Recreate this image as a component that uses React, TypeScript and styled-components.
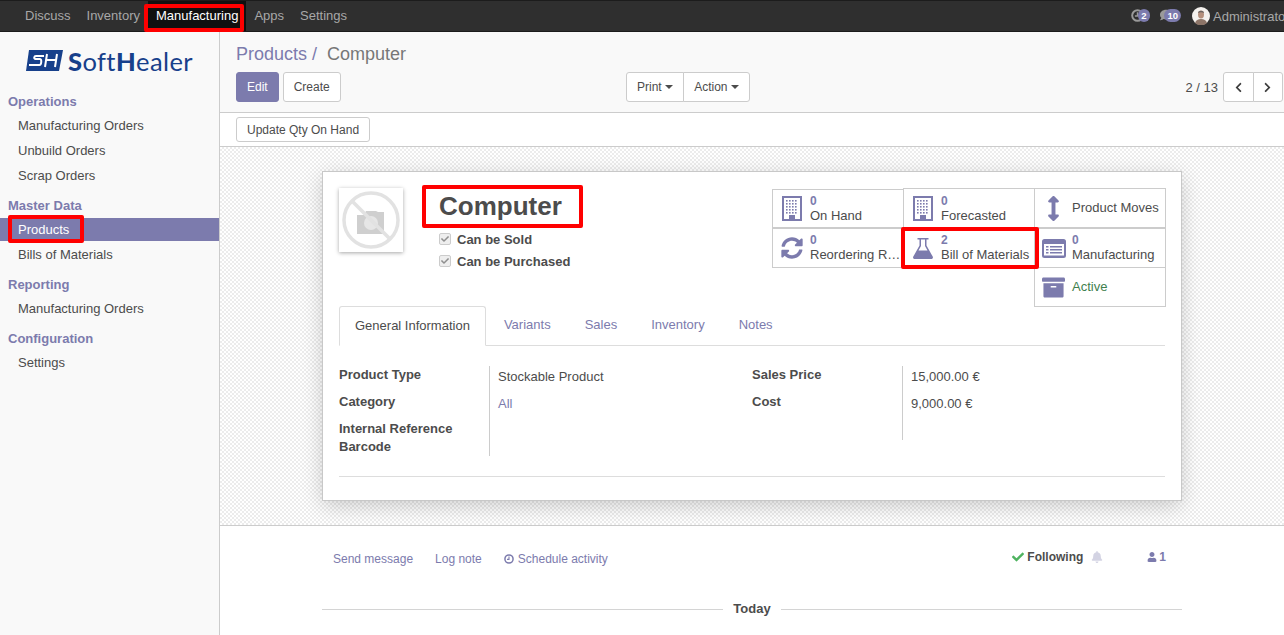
import React from 'react';
import styled, { createGlobalStyle } from 'styled-components';
import {
  FaSyncAlt, FaArrowsAltV, FaArchive, FaCheck, FaBell, FaUser,
  FaChevronLeft, FaChevronRight, FaComment,
} from 'react-icons/fa';

const primary = '#7c7bad';
const text = '#4c4c4c';
const line = '#cccccc';

const Global = createGlobalStyle`
  html, body { margin: 0; padding: 0; height: 635px; overflow: hidden; background: #fff; }
  body { font-family: "Liberation Sans", Arial, sans-serif; font-size: 13px; color: ${text}; }
  * { box-sizing: border-box; }
`;

const Page = styled.div`width: 1284px; height: 635px; display: flex; flex-direction: column; overflow: hidden;`;

const TopBar = styled.header`height: 32px; flex: none; display: flex; background: #2f2f2f; border-top: 1px solid #1c1c1c; border-bottom: 1px solid #1c1c1c;`;
const MenuList = styled.nav`flex: 1; min-width: 0; display: flex; padding-left: 17px;`;
const MenuItem = styled.a<{ $active?: boolean }>`
  position: relative; padding: 0 8px; line-height: 29px; height: 30px;
  color: ${p => (p.$active ? '#ffffff' : '#a8a8a8')};
  background: ${p => (p.$active ? '#101010' : 'transparent')};
`;
const NavMark = styled.span`position: absolute; left: -4px; right: 2px; top: 3px; bottom: -1px; border: 4px solid #ff0000; border-radius: 2px;`;
const Systray = styled.div`width: 153px; flex: none; overflow: hidden; display: flex; align-items: center; color: #a8a8a8; white-space: nowrap;`;
const TrayIcon = styled.span<{ $w: number }>`position: relative; width: ${p => p.$w}px; height: 16px; flex: none; display: block; color: #9a9a9a; svg { position: absolute; left: 0; top: 1px; }`;
const TrayBadge = styled.span`position: absolute; right: 0; top: 1px; height: 13px; min-width: 12px; padding: 0 3px; border-radius: 7px; background: ${primary}; color: #fff; font-size: 9.5px; font-weight: bold; line-height: 13px; text-align: center;`;
const Avatar = styled.svg`width: 18px; height: 18px; flex: none; margin: 0 3px 0 11px;`;

const Body = styled.div`flex: 1; min-height: 0; display: flex;`;
const Sidebar = styled.aside`width: 220px; flex: none; background: #f9f9f9; border-right: 1px solid ${line};`;
const LogoWrap = styled.div`height: 57px; display: flex; align-items: center; padding: 0 0 0 26px; gap: 5px;`;
const LogoText = styled.span`font-family: Lato, "Open Sans", sans-serif; font-size: 25.5px; line-height: 30px; color: #17408b; letter-spacing: 0.4px; b { font-weight: 900; }`;
const SideSection = styled.section`display: flex; flex-direction: column; margin-bottom: 5px;`;
const SideHead = styled.div`height: 24px; line-height: 26px; padding-left: 8px; font-weight: bold; color: ${primary};`;
const SideItem = styled.a<{ $active?: boolean }>`
  display: block; position: relative; height: 23px; line-height: 23px; margin: 1px 0; padding-left: 18px;
  color: ${p => (p.$active ? '#fff' : text)}; background: ${p => (p.$active ? primary : 'transparent')};
`;
const RowMark = styled.span`position: absolute; left: 8px; width: 76px; top: -3px; height: 28px; border: 4px solid #ff0000; border-radius: 2px;`;

const Main = styled.main`flex: 1; min-width: 0; display: flex; flex-direction: column;`;
const ControlPanel = styled.div`height: 81px; flex: none; background: #f9f9f9; border-bottom: 1px solid ${line}; padding: 0 1px 0 16px;`;
const Crumbs = styled.div`height: 40px; line-height: 44px; font-size: 18px; color: #777; span { color: ${primary}; margin-right: 10px; }`;
const ControlRow = styled.div`display: grid; grid-template-columns: 390px 1fr auto; align-items: center;`;
const Btn = styled.button<{ $primary?: boolean; $h?: number }>`
  height: ${p => p.$h ?? 30}px; padding: 0 10px; font: 12px "Liberation Sans", Arial, sans-serif;
  border: 1px solid ${p => (p.$primary ? primary : line)}; border-radius: 3px;
  background: ${p => (p.$primary ? primary : '#fff')}; color: ${p => (p.$primary ? '#fff' : text)};
  display: inline-flex; align-items: center; gap: 3.5px;
`;
const BtnRow = styled.div`display: flex; gap: 4px;`;
const JoinedGroup = styled.div`display: flex; ${Btn} { border-radius: 0; } ${Btn}:first-child { border-radius: 3px 0 0 3px; } ${Btn}:last-child { border-radius: 0 3px 3px 0; margin-left: -1px; }`;
const Caret = styled.span`width: 0; height: 0; border-left: 4px solid transparent; border-right: 4px solid transparent; border-top: 4px solid ${text};`;
const Pager = styled.div`display: flex; align-items: center; gap: 5px;`;
const PagerBtn = styled(Btn)`width: 30.5px; padding: 0; justify-content: center; color: #3d3d3d;`;

const StatusBar = styled.div`height: 34px; flex: none; background: #fff; border-bottom: 1px solid ${line}; padding: 4px 0 0 16px;`;

const SheetBg = styled.div`
  flex: none; padding: 24px 0; display: flex; justify-content: center; border-bottom: 1px solid ${line};
  background-color: #fff; background-image: conic-gradient(#ececec 25%, #fff 0 50%, #ececec 0 75%, #fff 0); background-size: 4px 4px;
`;
const Card = styled.div`width: 860px; height: 330px; background: #fff; border: 1px solid #c8c8c8; box-shadow: 0 5px 20px -1px rgba(0,0,0,0.2); padding: 16px 16px 0;`;
const Head = styled.div`height: 118px; display: flex; justify-content: space-between;`;
const HeadLeft = styled.div`display: flex;`;
const PhotoBox = styled.div`width: 64px; height: 64px; margin-right: 36px; background: #fff; box-shadow: 0 1px 4px rgba(0,0,0,0.35); svg { display: block; }`;
const TitleBlock = styled.div`padding-top: 1px;`;
const Title = styled.h1`position: relative; display: inline-block; margin: 0 0 5px; font-size: 26px; line-height: 34px; font-weight: bold; color: ${text};`;
const TitleMark = styled.span`position: absolute; left: -17px; right: -21px; top: -4px; bottom: -5px; border: 4px solid #ff0000; border-radius: 2px;`;
const CheckRow = styled.div`display: flex; align-items: center; height: 22px; font-weight: bold; gap: 6px;`;
const CheckBox = styled.span`width: 12px; height: 12px; border: 1px solid #ccc; border-radius: 2px; background: #eee; color: #8f8f8f; display: flex; align-items: center; justify-content: center; font-size: 8px;`;

const StatGrid = styled.div`display: grid; grid-template-columns: repeat(3, 131px); grid-template-rows: 40px 39px 40px; width: 394px; margin-right: -1px;`;
const Stat = styled.div<{ $col: number; $row: number; $lower?: boolean }>`
  grid-column: ${p => p.$col}; grid-row: ${p => p.$row};
  position: relative; width: 132px; height: ${p => (p.$lower ? 39 : 40)}px; margin-top: ${p => (p.$lower ? 1 : 0)}px;
  background: #fff; border: 1px solid ${line}; display: flex; align-items: center; color: ${text};
`;
const StatIcon = styled.span`width: 37px; flex: none; display: flex; justify-content: center; color: ${primary};`;
const StatBody = styled.div<{ $shift?: number }>`min-width: 0; width: 92px; margin-top: ${p => p.$shift ?? 0}px;`;
const StatNum = styled.div`font-weight: bold; color: ${primary}; font-size: 12px; line-height: 13px;`;
const StatLabel = styled.div<{ $green?: boolean }>`white-space: nowrap; line-height: 16px; color: ${p => (p.$green ? '#3f7f4f' : text)};`;
const StatMark = styled.span`position: absolute; z-index: 2; left: -3px; right: -5px; top: -2px; bottom: -2px; border: 4px solid #ff0000; border-radius: 2px;`;

const Tabs = styled.div`display: flex; height: 40px; border-bottom: 1px solid #ddd;`;
const Tab = styled.a<{ $active?: boolean }>`
  height: 40px; padding: 0 ${p => (p.$active ? 15 : 16)}px; margin-right: 2px; line-height: 38px;
  color: ${p => (p.$active ? text : primary)};
  ${p => p.$active && `background: #fff; border: 1px solid #ddd; border-bottom-color: #fff; border-radius: 3px 3px 0 0;`}
`;
const Form = styled.div`display: flex; padding-top: 20px;`;
const Group = styled.div`width: 413px; display: grid; grid-template-columns: 150px 1fr; align-items: start;`;
const Labels = styled.div``;
const Label = styled.div<{ $tight?: boolean }>`height: ${p => (p.$tight ? 18 : 27)}px; line-height: 18px; font-weight: bold;`;
const Values = styled.div<{ $h: number }>`height: ${p => p.$h}px; border-left: 1px solid ${line}; padding-left: 8px;`;
const Value = styled.div<{ $link?: boolean }>`height: 27px; line-height: 22px; color: ${p => (p.$link ? primary : text)};`;
const Rule = styled.hr`border: 0; border-top: 1px solid #ddd; margin: 20px 0 0;`;

const Chatter = styled.div`width: 860px; margin: 0 auto; background: #fff;`;
const ChatBar = styled.div`height: 64px; padding: 2px 16px 0 11px; display: flex; align-items: center; justify-content: space-between; font-size: 12px;`;
const ChatLinks = styled.div`display: flex; gap: 22px; color: ${primary}; a { display: flex; align-items: center; gap: 4px; }`;
const Follow = styled.div`display: flex; align-items: center; margin-top: -4px;`;
const Following = styled.span`display: flex; align-items: center; gap: 3px; font-weight: bold; color: ${text}; svg { color: #4fb360; }`;
const BellIcon = styled.span`display: flex; margin: 0 44px 0 8px; color: #d3d3e3;`;
const FollowerCount = styled.span`display: flex; align-items: center; gap: 2px; font-weight: bold; color: ${primary};`;
const DateLine = styled.div`display: flex; align-items: center; margin-top: 11px; font-weight: bold; &::before, &::after { content: ""; flex: 1; border-top: 1px solid #d4d4d4; }`;
const DateText = styled.span`padding: 0 10.5px; line-height: 16px;`;

const menu = ['Discuss', 'Inventory', 'Manufacturing', 'Apps', 'Settings'];
const sections: { head: string; items: string[] }[] = [
  { head: 'Operations', items: ['Manufacturing Orders', 'Unbuild Orders', 'Scrap Orders'] },
  { head: 'Master Data', items: ['Products', 'Bills of Materials'] },
  { head: 'Reporting', items: ['Manufacturing Orders'] },
  { head: 'Configuration', items: ['Settings'] },
];

const LogoMark = () => (
  <svg width="37" height="21" viewBox="0 0 37 21" style={{ flex: 'none' }}>
    <path d="M3 0H37L33 21H0Z" fill="#17408b" />
    <path d="M18 6H10C8 6 7.5 9 9.5 9H14C16 9 15.5 15 13.5 15H3" fill="none" stroke="#fff" strokeWidth="2" />
    <path d="M21 4L19 17M31 4L29 17M20 10H30" fill="none" stroke="#fff" strokeWidth="2" />
  </svg>
);

const NoPhoto = () => (
  <svg width="64" height="64" viewBox="0 0 64 64">
    <path d="M18 27h7l2-4h10l2 1h6v22H18z" fill="#cfcfcf" />
    <circle cx="32" cy="35" r="7" fill="#e6e6e6" />
    <circle cx="32" cy="32" r="27" fill="none" stroke="#e2e2e2" strokeWidth="3.5" />
    <path d="M13 13L51 51" stroke="#e2e2e2" strokeWidth="3.5" />
  </svg>
);

const BuildingIcon = () => (
  <svg width="20" height="25" viewBox="0 0 20 25" fill="currentColor">
    <path d="M0 0H20V25H0ZM2 2V23H7V19H13V23H18V2Z" fillRule="evenodd" />
    {[4, 7, 10, 13].map(x => [4, 7, 10, 13, 16].map(y => <rect key={`${x}-${y}`} x={x} y={y} width="1.6" height="1.6" />))}
  </svg>
);

const FlaskIcon = () => (
  <svg width="20" height="21" viewBox="0 0 20 21" fill="currentColor">
    <path fillRule="evenodd" d="M4.5 0H15.5V1.6H13.5V7.5L19.7 18.6C20.4 19.8 19.6 21 18.3 21H1.7C.4 21-.4 19.8.3 18.6L6.5 7.5V1.6H4.5ZM8 1.6V8L5.5 12.5H14.5L12 8V1.6Z" />
  </svg>
);

const ListIcon = () => (
  <svg width="24" height="19" viewBox="0 0 24 19" fill="currentColor">
    <path fillRule="evenodd" d="M2.5 0H21.5A2.5 2.5 0 0 1 24 2.5V16.5A2.5 2.5 0 0 1 21.5 19H2.5A2.5 2.5 0 0 1 0 16.5V2.5A2.5 2.5 0 0 1 2.5 0ZM2 5V16.5H22V5Z" />
    {[7, 10, 13].map(y => <rect key={y} x="4" y={y} width="2.5" height="1.5" />)}
    {[7, 10, 13].map(y => <rect key={y} x="8" y={y} width="12" height="1.5" />)}
  </svg>
);

const ClockIcon = ({ size }: { size: number }) => (
  <svg width={size} height={size} viewBox="0 0 12 12" fill="none" stroke="currentColor">
    <circle cx="6" cy="6" r="4.9" strokeWidth="1.8" />
    <path d="M6 3V6.4H3.6" strokeWidth="1.3" />
  </svg>
);

export default function App() {
  return (
    <Page>
      <Global />
      <TopBar>
        <MenuList>
          {menu.map(m => (
            <MenuItem key={m} $active={m === 'Manufacturing'}>
              {m}
              {m === 'Manufacturing' && <NavMark />}
            </MenuItem>
          ))}
        </MenuList>
        <Systray>
          <TrayIcon $w={19}>
            <ClockIcon size={13} />
            <TrayBadge>2</TrayBadge>
          </TrayIcon>
          <TrayIcon $w={21} style={{ marginLeft: 10 }}>
            <FaComment size={12} />
            <TrayBadge>10</TrayBadge>
          </TrayIcon>
          <Avatar viewBox="0 0 18 18">
            <circle cx="9" cy="9" r="9" fill="#f4f1ee" />
            <path d="M3 16c1-3 3-4 6-4s5 1 6 4a9 9 0 0 1-12 0z" fill="#8d7568" />
            <ellipse cx="9" cy="7.5" rx="3" ry="4" fill="#b58f7c" />
            <path d="M6 6c0-3 6-3 6 0-2-1-4-1-6 0z" fill="#6b6360" />
          </Avatar>
          Administrator
        </Systray>
      </TopBar>
      <Body>
        <Sidebar>
          <LogoWrap>
            <LogoMark />
            <LogoText><b>S</b>oft<b>H</b>ealer</LogoText>
          </LogoWrap>
          {sections.map(s => (
            <SideSection key={s.head}>
              <SideHead>{s.head}</SideHead>
              {s.items.map(i => (
                <SideItem key={i} $active={i === 'Products'}>
                  {i}
                  {i === 'Products' && <RowMark />}
                </SideItem>
              ))}
            </SideSection>
          ))}
        </Sidebar>
        <Main>
          <ControlPanel>
            <Crumbs><span>Products /</span>Computer</Crumbs>
            <ControlRow>
              <BtnRow>
                <Btn $primary>Edit</Btn>
                <Btn>Create</Btn>
              </BtnRow>
              <JoinedGroup>
                <Btn>Print <Caret /></Btn>
                <Btn>Action <Caret /></Btn>
              </JoinedGroup>
              <Pager>
                2 / 13
                <JoinedGroup>
                  <PagerBtn><FaChevronLeft size={11} /></PagerBtn>
                  <PagerBtn><FaChevronRight size={11} /></PagerBtn>
                </JoinedGroup>
              </Pager>
            </ControlRow>
          </ControlPanel>
          <StatusBar><Btn $h={25}>Update Qty On Hand</Btn></StatusBar>
          <SheetBg>
            <Card>
              <Head>
                <HeadLeft>
                  <PhotoBox><NoPhoto /></PhotoBox>
                  <TitleBlock>
                    <Title>Computer<TitleMark /></Title>
                    <CheckRow><CheckBox><FaCheck /></CheckBox>Can be Sold</CheckRow>
                    <CheckRow><CheckBox><FaCheck /></CheckBox>Can be Purchased</CheckRow>
                  </TitleBlock>
                </HeadLeft>
                <StatGrid>
                  <Stat $col={1} $row={1} $lower>
                    <StatIcon><BuildingIcon /></StatIcon>
                    <StatBody $shift={1}><StatNum>0</StatNum><StatLabel>On Hand</StatLabel></StatBody>
                  </Stat>
                  <Stat $col={2} $row={1}>
                    <StatIcon><BuildingIcon /></StatIcon>
                    <StatBody $shift={2}><StatNum>0</StatNum><StatLabel>Forecasted</StatLabel></StatBody>
                  </Stat>
                  <Stat $col={3} $row={1}>
                    <StatIcon><FaArrowsAltV size={25} /></StatIcon>
                    <StatBody $shift={-1}><StatLabel>Product Moves</StatLabel></StatBody>
                  </Stat>
                  <Stat $col={1} $row={2}>
                    <StatIcon><FaSyncAlt size={22} /></StatIcon>
                    <StatBody><StatNum>0</StatNum><StatLabel>Reordering R…</StatLabel></StatBody>
                  </Stat>
                  <Stat $col={2} $row={2}>
                    <StatIcon><FlaskIcon /></StatIcon>
                    <StatBody><StatNum>2</StatNum><StatLabel>Bill of Materials</StatLabel></StatBody>
                    <StatMark />
                  </Stat>
                  <Stat $col={3} $row={2}>
                    <StatIcon><ListIcon /></StatIcon>
                    <StatBody><StatNum>0</StatNum><StatLabel>Manufacturing</StatLabel></StatBody>
                  </Stat>
                  <Stat $col={3} $row={3}>
                    <StatIcon><FaArchive size={23} /></StatIcon>
                    <StatBody $shift={-1}><StatLabel $green>Active</StatLabel></StatBody>
                  </Stat>
                </StatGrid>
              </Head>
              <Tabs>
                <Tab $active>General Information</Tab>
                <Tab>Variants</Tab>
                <Tab>Sales</Tab>
                <Tab>Inventory</Tab>
                <Tab>Notes</Tab>
              </Tabs>
              <Form>
                <Group>
                  <Labels>
                    <Label>Product Type</Label>
                    <Label>Category</Label>
                    <Label $tight>Internal Reference</Label>
                    <Label $tight>Barcode</Label>
                  </Labels>
                  <Values $h={90}>
                    <Value>Stockable Product</Value>
                    <Value $link>All</Value>
                  </Values>
                </Group>
                <Group>
                  <Labels>
                    <Label>Sales Price</Label>
                    <Label>Cost</Label>
                  </Labels>
                  <Values $h={74}>
                    <Value>15,000.00 €</Value>
                    <Value>9,000.00 €</Value>
                  </Values>
                </Group>
              </Form>
              <Rule />
            </Card>
          </SheetBg>
          <Chatter>
            <ChatBar>
              <ChatLinks>
                <a>Send message</a>
                <a>Log note</a>
                <a><ClockIcon size={10} />Schedule activity</a>
              </ChatLinks>
              <Follow>
                <Following><FaCheck size={12} />Following</Following>
                <BellIcon><FaBell size={12} /></BellIcon>
                <FollowerCount><FaUser size={10} />1</FollowerCount>
              </Follow>
            </ChatBar>
            <DateLine><DateText>Today</DateText></DateLine>
          </Chatter>
        </Main>
      </Body>
    </Page>
  );
}
